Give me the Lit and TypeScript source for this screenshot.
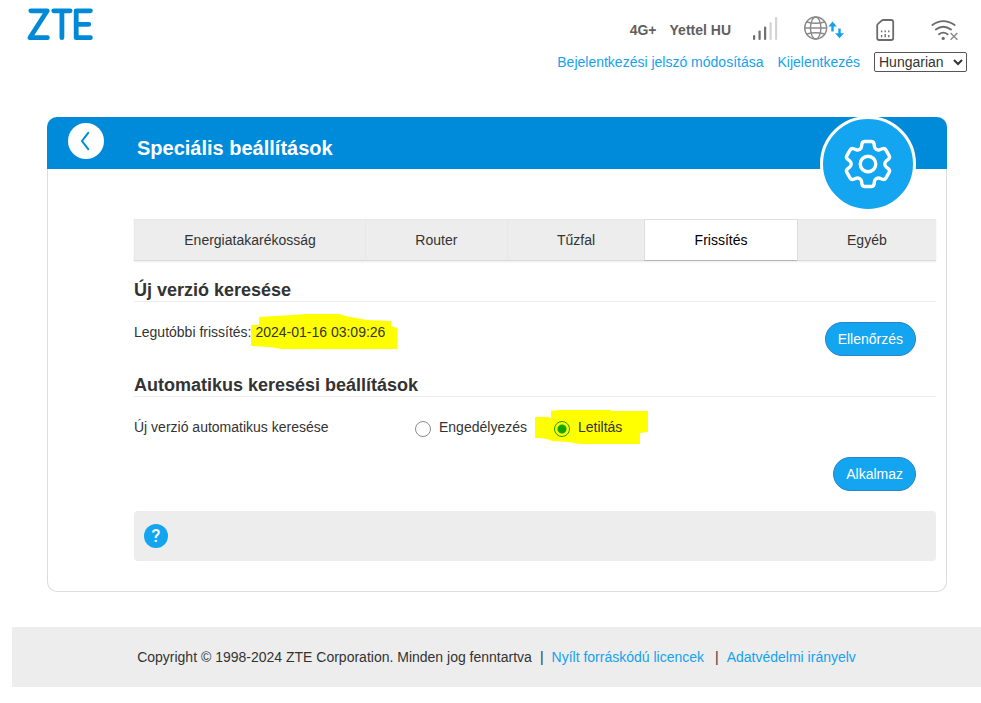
import { LitElement, html, css, svg } from "lit";
import { customElement, state } from "lit/decorators.js";
import { classMap } from "lit/directives/class-map.js";

const TABS = ["Energiatakarékosság", "Router", "Tűzfal", "Frissítés", "Egyéb"];

const GEAR =
  "M9.594 3.94c.09-.542.56-.94 1.11-.94h2.593c.55 0 1.02.398 1.11.94l.213 1.281c.063.374.313.686.645.87.074.04.147.083.22.127.325.196.72.257 1.075.124l1.217-.456a1.125 1.125 0 0 1 1.37.49l1.296 2.247a1.125 1.125 0 0 1-.26 1.431l-1.003.827c-.293.241-.438.613-.43.992a7.723 7.723 0 0 1 0 .255c-.008.378.137.75.43.991l1.004.827c.424.35.534.955.26 1.43l-1.298 2.247a1.125 1.125 0 0 1-1.369.491l-1.217-.456c-.355-.133-.75-.072-1.076.124a6.47 6.47 0 0 1-.22.128c-.331.183-.581.495-.644.869l-.213 1.281c-.09.543-.56.94-1.11.94h-2.594c-.55 0-1.019-.398-1.11-.94l-.213-1.281c-.062-.374-.312-.686-.644-.87a6.52 6.52 0 0 1-.22-.127c-.325-.196-.72-.257-1.076-.124l-1.217.456a1.125 1.125 0 0 1-1.369-.49l-1.297-2.247a1.125 1.125 0 0 1 .26-1.431l1.004-.827c.292-.24.437-.613.43-.991a6.932 6.932 0 0 1 0-.255c.007-.38-.138-.751-.43-.992l-1.004-.827a1.125 1.125 0 0 1-.26-1.43l1.297-2.247a1.125 1.125 0 0 1 1.37-.491l1.216.456c.356.133.751.072 1.076-.124.072-.044.146-.086.22-.128.332-.183.582-.495.644-.869l.214-1.28Z";

const BARS = [
  { x: 18, y: 19, on: true },
  { x: 23.5, y: 14.5, on: true },
  { x: 29, y: 10.5, on: true },
  { x: 34.5, y: 6, on: false },
  { x: 40, y: 1, on: false },
];

@customElement("app-header")
class AppHeader extends LitElement {
  static styles = css`
    :host {
      display: block;
    }
    .header {
      display: flex;
      justify-content: space-between;
      align-items: flex-start;
      padding: 8px 0 0 14px;
    }
    .logo {
      width: 70px;
      height: 34px;
    }
    .status {
      display: flex;
      justify-content: flex-end;
      align-items: center;
      height: 44px;
      padding-right: 6px;
      font-weight: bold;
      color: #5f5f5f;
    }
    .network {
      margin-right: 13px;
    }
    .operator {
      margin-right: 4px;
    }
    .icon {
      width: 60px;
      height: 28px;
    }
    .links {
      display: flex;
      justify-content: flex-end;
      align-items: center;
      gap: 14px;
      height: 20px;
      padding-right: 14px;
    }
    a {
      color: #14a2ed;
      text-decoration: none;
    }
    select {
      height: 20px;
      width: 93px;
      padding: 0;
      border: 1px solid #555;
      border-radius: 2px;
      background-color: #fff;
      color: #333;
      font: inherit;
    }
  `;

  render() {
    return html`
      <header class="header">
        <svg class="logo" viewBox="26 8 70 34" role="img" aria-label="ZTE" fill="none"
          stroke="#0089d6" stroke-width="4.8" stroke-linecap="round" stroke-linejoin="round">
          <polyline points="30.8,10.8 47.2,10.8 29.9,37.7 47.4,37.7" />
          <path d="M53.7 10.8H70.1M61.9 10.8V37.7" />
          <path d="M90.4 10.8H76.2V37.7H90.4M76.2 24.3H88.8" />
        </svg>
        <div>
          <div class="status">
            <span class="network">4G+</span>
            <span class="operator">Yettel HU</span>
            <svg class="icon" viewBox="0 0 60 28" aria-hidden="true">
              ${BARS.map(
                (b) => svg`<rect x=${b.x} y=${b.y} width="2.2" height=${24 - b.y} rx="1"
                  fill=${b.on ? "#707070" : "#d3d3d3"} />`
              )}
            </svg>
            <svg class="icon" viewBox="0 0 60 28" fill="none" aria-hidden="true">
              <g stroke="#8a8a8a" stroke-width="1.4">
                <circle cx="20.7" cy="12" r="11" />
                <ellipse cx="20.7" cy="12" rx="5.2" ry="11" />
                <path d="M9.7 12H31.7M11.8 6Q20.7 8.6 29.6 6M11.8 18Q20.7 15.4 29.6 18" />
              </g>
              <g fill="#14a2ed">
                <path d="M37.5 5.6L41.8 10.4H38.7V15.4H36.3V10.4H33.4Z" />
                <path d="M44.5 22.2L49 17.2H45.7V12.6H43.3V17.2H40.1Z" />
              </g>
            </svg>
            <svg class="icon" viewBox="0 0 60 28" fill="none" stroke="#6c6c6c" aria-hidden="true">
              <path stroke-width="1.8" stroke-linejoin="round"
                d="M28.2 4H36.2A2 2 0 0 1 38.2 6V22A2 2 0 0 1 36.2 24H24.2A2 2 0 0 1 22.2 22V9.6Q22.2 8.6 23 7.9L26.6 4.6Q27.3 4 28.2 4Z" />
              <path stroke-width="1.4"
                d="M26.6 14.5V16.2M30.2 14.5V16.2M33.8 14.5V16.2M26.6 19V21.3M30.2 18V21.3M33.8 19V21.3" />
            </svg>
            <svg class="icon" viewBox="0 0 60 28" fill="none" stroke="#6c6c6c" aria-hidden="true">
              <g stroke-width="1.9" stroke-linecap="round">
                <path d="M17.4 9Q28.2 1.2 39.6 9" />
                <path d="M20.8 13.5Q28.2 8 36 13.5" />
                <path d="M24 18.2Q28.2 15 32.6 18.2" />
              </g>
              <circle cx="28.2" cy="22.4" r="1.6" fill="#6c6c6c" stroke="none" />
              <path stroke="#8a8a8a" stroke-width="1.4" d="M35.6 17L42.4 23.8M42.4 17L35.6 23.8" />
            </svg>
          </div>
          <div class="links">
            <a href="#password">Bejelentkezési jelszó módosítása</a>
            <a href="#logout">Kijelentkezés</a>
            <select aria-label="Language">
              <option>Hungarian</option>
              <option>English</option>
            </select>
          </div>
        </div>
      </header>
    `;
  }
}

@customElement("update-panel")
class UpdatePanel extends LitElement {
  @state() private tab = "Frissítés";
  @state() private auto = false;

  static styles = css`
    :host {
      display: block;
    }
    .card {
      position: relative;
      border: 1px solid #dcdcdc;
      border-top: 0;
      border-radius: 10px;
    }
    .bar {
      display: flex;
      align-items: flex-start;
      gap: 33px;
      height: 52px;
      margin: 0 -1px;
      padding-left: 21px;
      border-radius: 10px 10px 0 0;
      background: #008bda;
      box-sizing: border-box;
    }
    .back {
      width: 36px;
      height: 36px;
      margin-top: 6px;
      padding: 0;
      border: 0;
      border-radius: 50%;
      background: #fff;
    }
    .back svg {
      display: block;
      width: 36px;
      height: 36px;
    }
    h1 {
      margin: 19px 0 0;
      font-size: 20px;
      line-height: 24px;
      color: #fff;
    }
    .badge {
      position: absolute;
      top: -1px;
      right: 30px;
      display: grid;
      place-items: center;
      width: 90px;
      height: 90px;
      border: 3px solid #fff;
      border-radius: 50%;
      background: #14a5f0;
    }
    .badge svg {
      width: 60px;
      height: 60px;
    }
    .content {
      padding: 50px 10px 30px 86px;
    }
    .tabs {
      display: flex;
      height: 42px;
      box-shadow: 0 1px 2px #ececec;
    }
    .tab {
      flex: 1 1 auto;
      padding: 0 49px;
      border: 1px solid #e8e8e8;
      border-width: 1px 0 1px 1px;
      border-bottom-color: #d9d9d9;
      background: #ededed;
      color: #333;
      font: inherit;
    }
    .tab.active {
      background: #fff;
      border-color: #dedede;
      border-bottom-color: #b5b5b5;
      color: #000;
    }
    .tab.active + .tab {
      border-left-color: #dedede;
    }
    h2 {
      margin: 18px 0 20px;
      border-bottom: 1px solid #ebebeb;
      font-size: 18px;
      line-height: 22px;
    }
    .row {
      display: flex;
      justify-content: space-between;
      align-items: flex-start;
      padding-right: 20px;
    }
    .marked {
      position: relative;
      isolation: isolate;
    }
    .mark {
      position: absolute;
      z-index: -1;
      fill: #ff0;
    }
    .mark-date {
      left: -4px;
      top: -10px;
      width: 146px;
      height: 35px;
    }
    .mark-option {
      left: -19px;
      top: -7px;
      width: 113px;
      height: 34px;
    }
    .setting {
      display: grid;
      grid-template-columns: 281px 1fr;
    }
    .options {
      display: flex;
      gap: 27px;
    }
    .option {
      display: flex;
      gap: 8px;
    }
    input {
      appearance: none;
      width: 16px;
      height: 16px;
      margin: 4px 0 0;
      border: 1px solid #8c8c8c;
      border-radius: 50%;
      background: #fff;
      box-sizing: border-box;
    }
    input:checked {
      border-color: #12a400;
      background: radial-gradient(circle, #12a400 4px, transparent 5px);
    }
    .action {
      height: 34px;
      padding: 0 12px;
      border: 1px solid #2b84c6;
      border-radius: 17px;
      background: #14a5f0;
      color: #fff;
      font: inherit;
    }
    .apply {
      justify-content: flex-end;
      margin: 20px 0;
    }
    .help {
      display: flex;
      align-items: center;
      height: 50px;
      padding: 0 10px;
      border-radius: 4px;
      background: #ededed;
    }
    .help button {
      width: 24px;
      height: 24px;
      padding: 0;
      border: 0;
      border-radius: 50%;
      background: #14a5f0;
      color: #fff;
      font: 500 18px/24px Roboto, sans-serif;
    }
  `;

  render() {
    return html`
      <main class="card">
        <div class="bar">
          <button class="back" aria-label="Vissza">
            <svg viewBox="0 0 36 36" fill="none" stroke="#008bda" stroke-width="2">
              <path d="M20.8 9.2L14 18L20.8 26.8" />
            </svg>
          </button>
          <h1>Speciális beállítások</h1>
        </div>
        <div class="badge">
          <svg viewBox="0 0 24 24" fill="none" stroke="#fff" stroke-width="1.35" aria-hidden="true">
            <path d=${GEAR} />
            <circle cx="12" cy="12" r="3.1" />
          </svg>
        </div>
        <div class="content">
          <nav class="tabs">
            ${TABS.map(
              (t) => html`<button class=${classMap({ tab: true, active: t === this.tab })}
                @click=${() => (this.tab = t)}>${t}</button>`
            )}
          </nav>

          <h2>Új verzió keresése</h2>
          <div class="row">
            <div>
              Legutóbbi frissítés:
              <span class="marked"><svg class="mark mark-date" viewBox="251 314 146 35" aria-hidden="true">
                <polygon points="251,325 259,325 259,317 275,316 292,315 306,314 340,314 345,316 367,320 391,321 391,326 397,328 397,349 282,349 270,347 251,346" />
              </svg>2024-01-16 03:09:26</span>
            </div>
            <button class="action">Ellenőrzés</button>
          </div>

          <h2>Automatikus keresési beállítások</h2>
          <div class="setting" role="radiogroup" aria-labelledby="auto-label">
            <span id="auto-label">Új verzió automatikus keresése</span>
            <div class="options">
              <label class="option">
                <input type="radio" name="auto" .checked=${this.auto} @change=${() => (this.auto = true)} />
                Engedélyezés
              </label>
              <label class="option marked">
                <svg class="mark mark-option" viewBox="535 410 113 34" aria-hidden="true">
                  <polygon points="535,417 548,417 551,418 551,411 559,410 611,410 611,411 648,411 648,432 640,433 640,444 580,444 568,442 552,441 547,439 540,438 535,438" />
                </svg>
                <input type="radio" name="auto" .checked=${!this.auto} @change=${() => (this.auto = false)} />
                Letiltás
              </label>
            </div>
          </div>
          <div class="row apply">
            <button class="action">Alkalmaz</button>
          </div>

          <div class="help"><button aria-label="Súgó">?</button></div>
        </div>
      </main>
    `;
  }
}

@customElement("app-root")
class AppRoot extends LitElement {
  static styles = css`
    :host {
      display: block;
      padding: 0 0 16px 12px;
      background: #fff;
      color: #333;
      font: 14px/20px "Liberation Sans", Arial, sans-serif;
    }
    update-panel {
      margin: 45px 34px 35px 35px;
    }
    .footer {
      display: flex;
      justify-content: center;
      align-items: center;
      gap: 8px;
      min-height: 60px;
      background: #ededed;
    }
    a {
      color: #14a2ed;
      text-decoration: none;
    }
    .first {
      margin-right: 3px;
    }
  `;

  render() {
    return html`
      <app-header></app-header>
      <update-panel></update-panel>
      <footer class="footer">
        <span>Copyright © 1998-2024 ZTE Corporation. Minden jog fenntartva</span>
        <span>|</span>
        <a class="first" href="#licences">Nyílt forráskódú licencek</a>
        <span>|</span>
        <a href="#privacy">Adatvédelmi irányelv</a>
      </footer>
    `;
  }
}
